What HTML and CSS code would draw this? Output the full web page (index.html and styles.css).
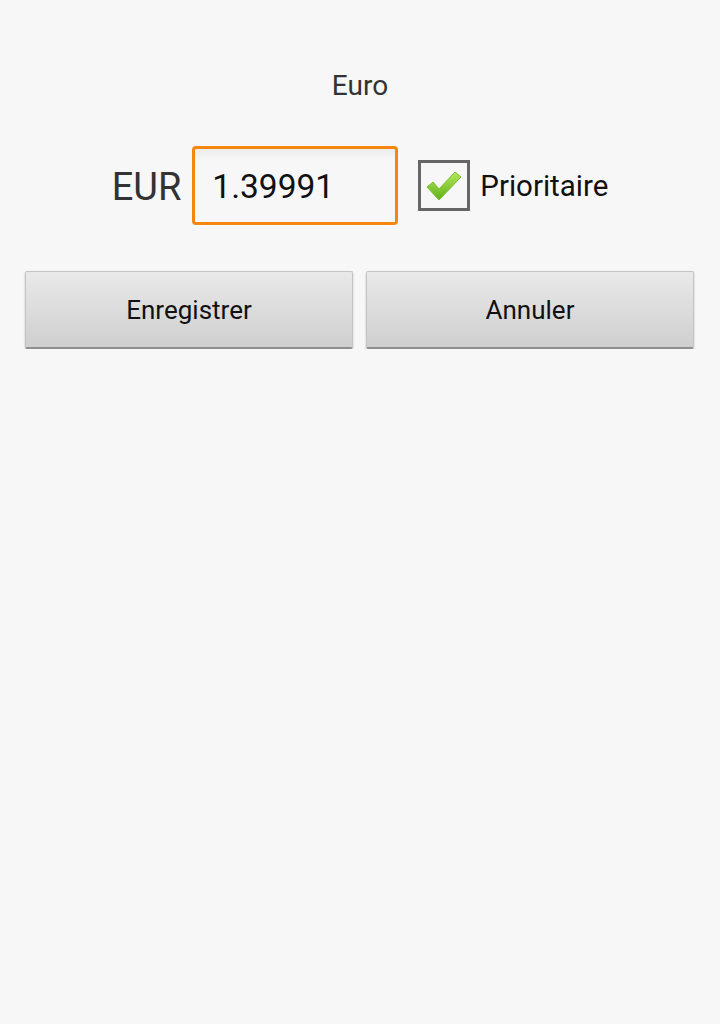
FILE: index.html
```html
<!DOCTYPE html>
<html lang="fr">
<head>
  <meta charset="UTF-8">
  <title>Euro</title>
  <link rel="stylesheet" href="styles.css">
</head>
<body>

  <h1 class="title">Euro</h1>

  <div class="rate-row">
    <span class="currency">EUR</span>
    <input type="text" class="rate-input" value="1.39991">
    <label class="priority">
      <span class="check-box">
        <svg width="40" height="36" viewBox="0 0 40 36">
          <defs>
            <linearGradient id="g" x1="0" y1="0" x2="0" y2="1">
              <stop offset="0" stop-color="#b2e85a"/>
              <stop offset="1" stop-color="#62b01a"/>
            </linearGradient>
          </defs>
          <path d="M3 19 L9 14 L15 21 L31 4 L37 9 L15 32 Z" fill="url(#g)" stroke="#78c030" stroke-width="1" stroke-linejoin="round"/>
        </svg>
      </span>
      Prioritaire
    </label>
  </div>

  <div class="actions">
    <button class="btn">Enregistrer</button>
    <button class="btn">Annuler</button>
  </div>

</body>
</html>
```

FILE: styles.css
```css
body {
  margin: 0;
  background: #f7f7f7;
  font-family: Roboto, "Noto Sans", sans-serif;
  color: #222;
}

.title {
  margin: 0;
  padding-top: 70px;
  text-align: center;
  font-size: 28px;
  font-weight: normal;
  line-height: 32px;
  color: #333;
}

.rate-row {
  display: flex;
  align-items: center;
  justify-content: center;
  margin-top: 44px;
  height: 79px;
}

.currency {
  font-size: 38px;
  color: #333;
  margin-right: 11px;
  padding-top: 2px;
}

.rate-input {
  box-sizing: border-box;
  width: 206px;
  height: 79px;
  border: 3px solid #f5870f;
  border-radius: 4px;
  background: linear-gradient(#ececec, #f7f7f7 12px);
  padding: 2px 17px 0;
  font-family: Roboto, "Noto Sans", sans-serif;
  font-size: 33.5px;
  color: #111;
  outline: none;
}

.priority {
  display: flex;
  align-items: center;
  margin-left: 20px;
  font-size: 29.5px;
  color: #111;
}

.check-box {
  box-sizing: border-box;
  width: 52px;
  height: 51px;
  border: 3px solid #666;
  display: flex;
  align-items: center;
  justify-content: center;
  margin-right: 10px;
}

.actions {
  display: flex;
  gap: 13px;
  padding: 0 26px 0 25px;
  margin-top: 46px;
}

.btn {
  flex: 1;
  height: 78px;
  padding-top: 2px;
  border: 1px solid #c4c4c4;
  border-bottom: 2px solid #8f8f8f;
  border-radius: 2px;
  background: linear-gradient(#e9e9e9, #dcdcdc 50%, #cfcfcf);
  box-shadow: 0 1px 2px rgba(0, 0, 0, 0.25);
  font-family: Roboto, "Noto Sans", sans-serif;
  font-size: 26px;
  color: #111;
  cursor: pointer;
}
```
